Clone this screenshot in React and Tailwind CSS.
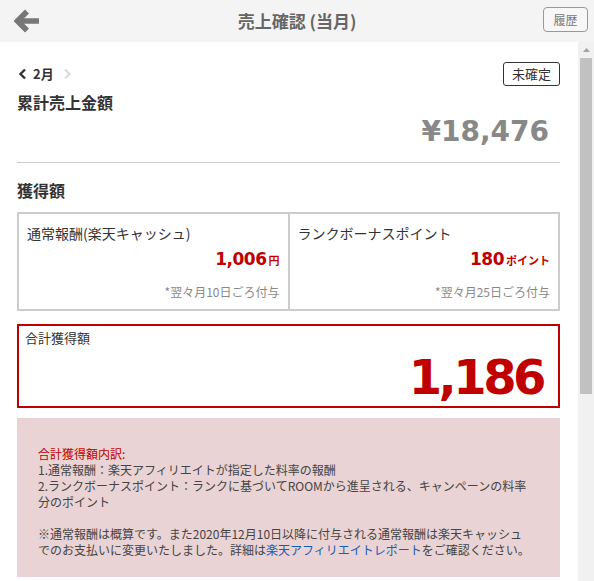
import React from "react";

const jp = "font-['Noto_Sans_CJK_JP','Noto_Sans',sans-serif]";
const num = "font-['DejaVu_Sans',sans-serif]";

const BackArrow = () => (
  <svg width="26" height="24" viewBox="0 0 26 24" className="block">
    <polyline points="13,2.5 3.5,12 13,21.5" fill="none" stroke="#777" strokeWidth="5.5" strokeLinejoin="miter" />
    <line x1="5" y1="12" x2="25" y2="12" stroke="#777" strokeWidth="5.5" />
  </svg>
);

const Chevron = ({ dir = "left", color }) => (
  <svg width="9" height="12" viewBox="0 0 9 12" className="block">
    <polyline
      points={dir === "left" ? "7,1.5 2.5,6 7,10.5" : "2,1.5 6.5,6 2,10.5"}
      fill="none"
      stroke={color}
      strokeWidth="2.4"
    />
  </svg>
);

const EarningBox = ({ label, value, unit, note, withDivider }) => (
  <div className={`flex-1 pl-[8px] pr-[8px] pt-[9px] pb-[9px] ${withDivider ? "border-r-2 border-[#ccc]" : ""}`}>
    <div className="text-[14px] leading-[20px] text-[#333]">{label}</div>
    <div className="mt-[5px] flex items-baseline justify-end text-[#c00000]">
      <span className={`${num} text-[17px] leading-[22px] font-bold tracking-[-0.5px]`}>{value}</span>
      <span className="ml-[2px] text-[11px] font-bold">{unit}</span>
    </div>
    <div className="mt-[14px] text-right text-[12px] leading-[16px] text-[#888]">{note}</div>
  </div>
);

export default function App() {
  return (
    <div className={`${jp} flex h-[581px] w-[594px] flex-col overflow-hidden bg-white`}>
      <header className="relative flex h-[42px] shrink-0 items-center bg-[#f4f4f4]">
        <div className="pl-[14px]">
          <BackArrow />
        </div>
        <h1 className="absolute left-1/2 top-1/2 -translate-x-1/2 -translate-y-1/2 whitespace-nowrap text-[17px] font-bold text-[#666]">
          売上確認 (当月)
        </h1>
        <button className="absolute right-[6px] top-[7px] h-[25px] w-[45px] rounded-[4px] border border-[#999] bg-[#f7f7f7] text-[12px] text-[#777]">
          履歴
        </button>
      </header>

      <div className="flex min-h-0 flex-1">
        <main className="min-w-0 flex-1 pl-[17px] pr-[18px] pt-[20px]">
          <div className="flex h-[24px] items-center justify-between">
            <div className="flex items-center">
              <span className="ml-[1px]">
                <Chevron dir="left" color="#333" />
              </span>
              <span className="ml-[6px] text-[13px] font-bold text-[#333]">2月</span>
              <span className="ml-[9px]">
                <Chevron dir="right" color="#ddd" />
              </span>
            </div>
            <span className="flex h-[24px] w-[57px] items-center justify-center rounded-[3px] border border-[#333] text-[13px] text-[#333]">
              未確定
            </span>
          </div>

          <h2 className="mt-[5px] text-[16px] leading-[22px] font-bold text-[#333]">累計売上金額</h2>
          <div className={`${num} mt-[5px] pr-[11px] text-right text-[28px] leading-none font-bold text-[#888]`}>
            ¥18,476
          </div>
          <hr className="mt-[16px] border-0 border-t border-[#ccc]" />

          <h2 className="mt-[16px] text-[16px] leading-[22px] font-bold text-[#333]">獲得額</h2>
          <div className="mt-[11px] flex border-2 border-[#ccc]">
            <EarningBox label="通常報酬(楽天キャッシュ)" value="1,006" unit="円" note="*翌々月10日ごろ付与" withDivider />
            <EarningBox label="ランクボーナスポイント" value="180" unit="ポイント" note="*翌々月25日ごろ付与" />
          </div>

          <div className="mt-[13px] border-2 border-[#c00000] pl-[6px] pr-[15px] pt-[3px] pb-[5px]">
            <div className="text-[13px] leading-[18px] text-[#333]">合計獲得額</div>
            <div className={`${num} mt-[6px] text-right text-[48px] leading-none font-bold tracking-[-3.5px] text-[#c00000]`}>
              1,186
            </div>
          </div>

          <div className="mt-[10px] bg-[#e9d3d4] pl-[21px] pr-[10px] pt-[28px] pb-[19px] text-[12px] leading-[16px] whitespace-nowrap text-[#444]">
            <div className="text-[#c00000]">合計獲得額内訳:</div>
            <div>1.通常報酬：楽天アフィリエイトが指定した料率の報酬</div>
            <div>2.ランクボーナスポイント：ランクに基づいてROOMから進呈される、キャンペーンの料率</div>
            <div>分のポイント</div>
            <div className="h-[16px]" />
            <div>※通常報酬は概算です。また2020年12月10日以降に付与される通常報酬は楽天キャッシュ</div>
            <div>
              でのお支払いに変更いたしました。詳細は<span className="text-[#1a5bb4]">楽天アフィリエイトレポート</span>をご確認ください。
            </div>
          </div>
        </main>

        <div className="flex w-[16px] shrink-0 flex-col bg-[#f1f1f1]">
          <div className="flex h-[16px] items-center justify-center">
            <svg width="7" height="4" viewBox="0 0 7 4">
              <polygon points="0,4 3.5,0 7,4" fill="#a3a3a3" />
            </svg>
          </div>
          <div className="mx-[2px] h-[336px] bg-[#c1c1c1]" />
        </div>
      </div>
    </div>
  );
}
